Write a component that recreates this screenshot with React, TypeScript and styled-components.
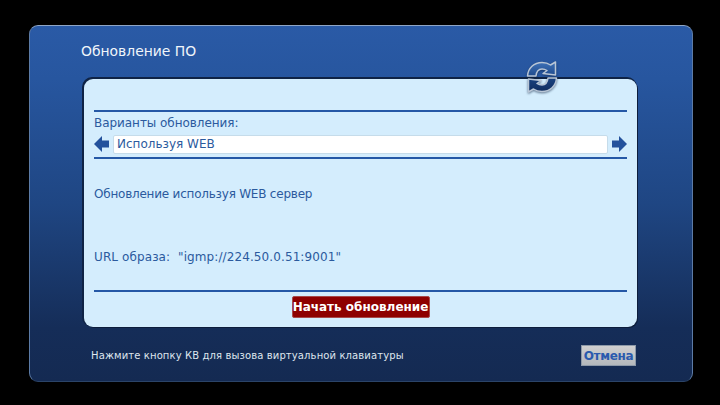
import { createGlobalStyle } from 'styled-components';
import styled from 'styled-components';

const Global = createGlobalStyle`
  html, body { margin: 0; padding: 0; background: #000; }
  body { width: 720px; height: 405px; overflow: hidden; font-family: "DejaVu Sans", Verdana, sans-serif; }
`;

const Screen = styled.div`
  width: 720px;
  height: 405px;
  box-sizing: border-box;
  padding: 25px 28px 24px 29px;
  background: #000;
`;

const Panel = styled.div`
  position: relative;
  width: 664px;
  height: 357px;
  box-sizing: border-box;
  padding: 0 54px;
  display: flex;
  flex-direction: column;
  border-radius: 9px;
  border: 1px solid #5c7ba6;
  border-top-color: #8fa6c6;
  border-bottom-color: #2b4468;
  background: linear-gradient(to bottom, #2a5aa6 0%, #27569f 15%, #1f4683 50%, #152d58 85%, #142a52 100%);
`;

const Title = styled.div`
  height: 53px;
  padding-top: 17px;
  box-sizing: border-box;
  color: #f0f5fa;
  font-size: 13.9px;
  line-height: 17px;
  margin-left: -3px;
`;

const Content = styled.div`
  width: 553px;
  height: 248px;
  box-sizing: border-box;
  padding: 31px 10px 0;
  display: flex;
  flex-direction: column;
  border-radius: 9px;
  background: #d4edfd;
  box-shadow: -1px -1px 0 1px #0f2345, 1px 1px 0 #0d1d3b;
`;

const Rule = styled.div`
  height: 2px;
  flex: none;
  background: #2558a6;
`;

const Label = styled.div`
  margin-top: 3px;
  height: 18px;
  color: #2b5a9e;
  font-size: 12px;
  line-height: 16px;
  letter-spacing: -0.05px;
`;

const SelectRow = styled.div`
  display: flex;
  align-items: center;
  height: 20px;
  margin-top: 1px;
  margin-bottom: 3px;
  gap: 4px;
`;

const Arrow = styled.svg`
  width: 15px;
  height: 18px;
  flex: none;
  fill: #23519c;
`;

const SelectBox = styled.div`
  flex: 1;
  height: 19px;
  box-sizing: border-box;
  padding-left: 3px;
  background: #fff;
  border: 1px solid #c6dcea;
  border-radius: 2px;
  color: #2b5a9e;
  font-size: 12px;
  line-height: 17px;
`;

const Info = styled.div<{ $height: number; $top: number; $spacing: number }>`
  height: ${p => p.$height}px;
  padding-top: ${p => p.$top}px;
  box-sizing: border-box;
  color: #2b5a9e;
  font-size: 12px;
  line-height: 16px;
  letter-spacing: ${p => p.$spacing}px;
  white-space: pre;
`;

const Actions = styled.div`
  display: flex;
  justify-content: center;
  margin-top: 4px;
`;

const StartButton = styled.div`
  width: 138px;
  height: 22px;
  box-sizing: border-box;
  text-align: center;
  background: #8e0000;
  border: 1px solid #a84a4a;
  border-radius: 2px;
  color: #fff;
  font-size: 12px;
  font-weight: bold;
  line-height: 20px;
  white-space: nowrap;
`;

const Footer = styled.div`
  display: flex;
  justify-content: space-between;
  align-items: center;
  width: 553px;
  margin-top: 18px;
`;

const Hint = styled.div`
  margin-left: 7px;
  color: #dfe6ee;
  font-size: 10px;
  line-height: 20px;
  letter-spacing: 0.12px;
`;

const CancelButton = styled.div`
  width: 55px;
  height: 21px;
  box-sizing: border-box;
  margin-right: 1px;
  text-align: center;
  background: linear-gradient(to bottom, #d0d0d0, #b4b8bc);
  border: 1px solid #8d99a8;
  color: #2a5aae;
  font-size: 12px;
  font-weight: bold;
  line-height: 20px;
  letter-spacing: -0.3px;
`;

const SyncIcon = styled.svg`
  position: absolute;
  left: 495px;
  top: 34px;
  width: 34px;
  height: 34px;
  filter: drop-shadow(0 1px 1px rgba(10, 30, 60, 0.55));
`;

const ArrowLeft = () => (
  <Arrow viewBox="0 0 15 18">
    <path d="M0 9 L8 1 L8 5.5 L15 5.5 L15 12.5 L8 12.5 L8 17 Z" />
  </Arrow>
);

const ArrowRight = () => (
  <Arrow viewBox="0 0 15 18">
    <path d="M15 9 L7 1 L7 5.5 L0 5.5 L0 12.5 L7 12.5 L7 17 Z" />
  </Arrow>
);

const Sync = () => (
  <SyncIcon viewBox="0 0 34 34">
    <defs>
      <linearGradient id="syncTop" x1="0" y1="0" x2="0" y2="1">
        <stop offset="0" stopColor="#3f72b8" />
        <stop offset="1" stopColor="#1f4a8c" />
      </linearGradient>
      <linearGradient id="syncBottom" x1="0" y1="0" x2="0" y2="1">
        <stop offset="0" stopColor="#1a4280" />
        <stop offset="1" stopColor="#0f2c5e" />
      </linearGradient>
    </defs>
    <g stroke="#b9c6d6" strokeWidth="1.5" strokeLinejoin="round">
      <path
        fill="url(#syncTop)"
        d="M2.5 16 C3 8 9 2.5 17 2.5 C20.5 2.5 23.5 3.5 25.5 5 L30.5 2 L30.5 15 L18 13.5 L22 10.5 C20.5 9.5 19 9 17 9 C13.5 9 11.5 11.5 11 16 Z"
      />
      <path
        fill="url(#syncBottom)"
        d="M31.5 18 C31 26 25 31.5 17 31.5 C13.5 31.5 10.5 30.5 8.5 29 L3.5 32 L3.5 19 L16 20.5 L12 23.5 C13.5 24.5 15 25 17 25 C20.5 25 22.5 22.5 23 18 Z"
      />
    </g>
  </SyncIcon>
);

export default function App() {
  return (
    <>
      <Global />
      <Screen>
        <Panel>
          <Title>Обновление ПО</Title>
          <Content>
            <Rule />
            <Label>Варианты обновления:</Label>
            <SelectRow>
              <ArrowLeft />
              <SelectBox>Используя WEB</SelectBox>
              <ArrowRight />
            </SelectRow>
            <Rule />
            <Info $height={64} $top={27} $spacing={-0.22}>Обновление используя WEB сервер</Info>
            <Info $height={67} $top={26} $spacing={0.1}>{'URL образа:  "igmp://224.50.0.51:9001"'}</Info>
            <Rule />
            <Actions>
              <StartButton>Начать обновление</StartButton>
            </Actions>
          </Content>
          <Footer>
            <Hint>Нажмите кнопку КВ для вызова виртуальной клавиатуры</Hint>
            <CancelButton>Отмена</CancelButton>
          </Footer>
          <Sync />
        </Panel>
      </Screen>
    </>
  );
}
